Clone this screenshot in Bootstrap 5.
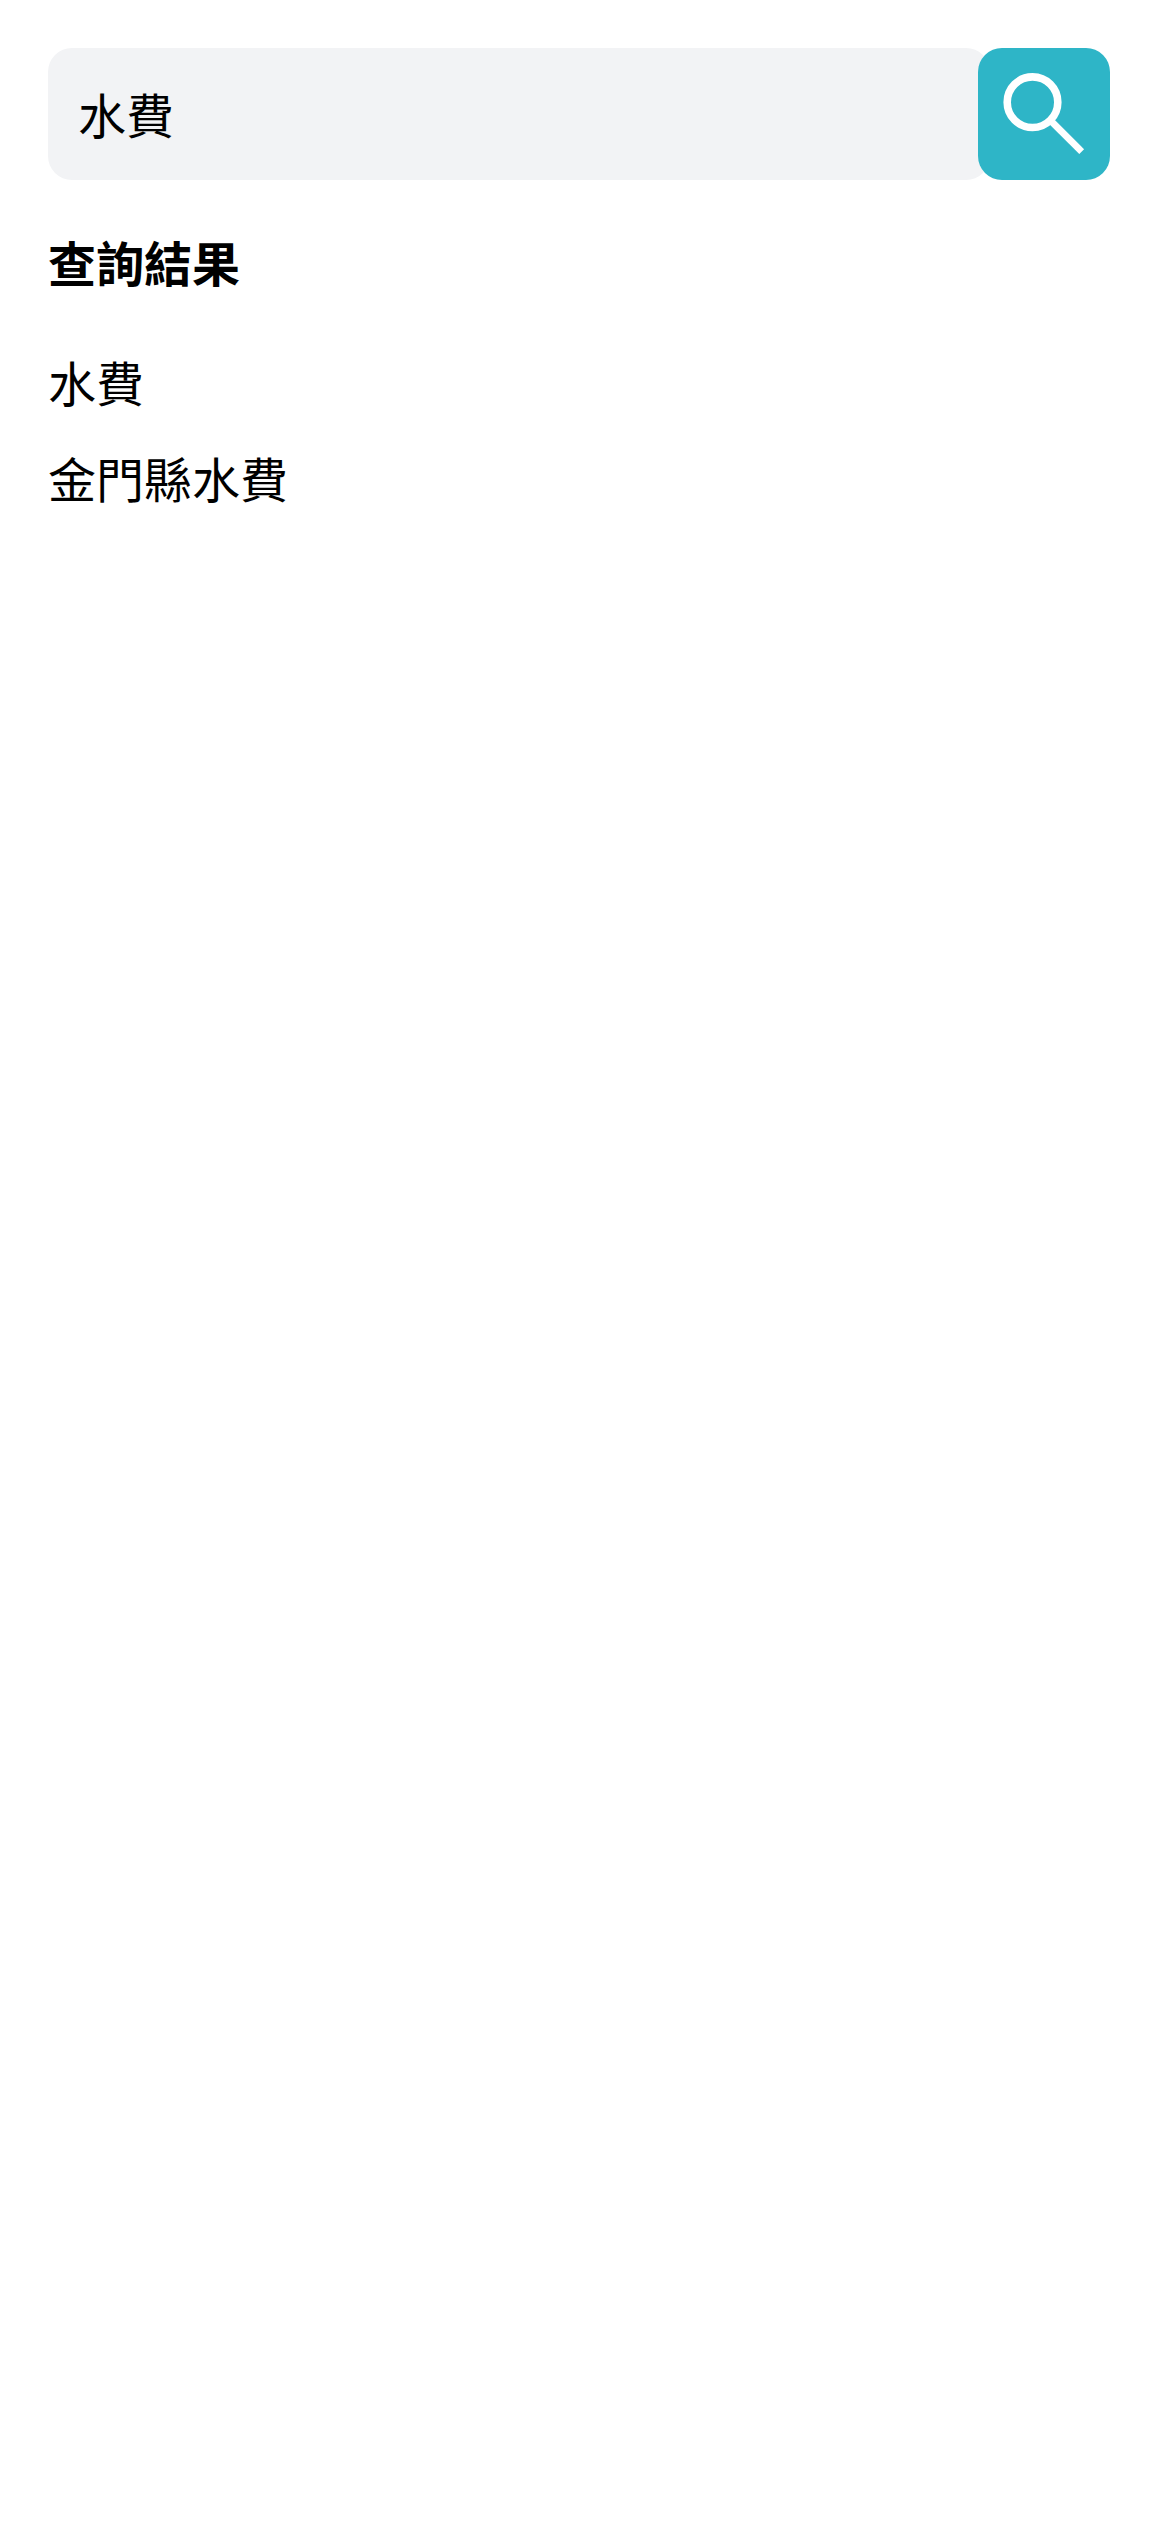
<!DOCTYPE html>
<html lang="zh-Hant">
<head>
<meta charset="utf-8">
<title>查詢結果</title>
<link href="https://cdn.jsdelivr.net/npm/bootstrap@5.3.0/dist/css/bootstrap.min.css" rel="stylesheet">
<style>
html, body { background: #fff; }
body { font-family: "Liberation Sans", "Noto Sans CJK TC", sans-serif; color: #000; padding: 48px 60px 0 48px; }
.search-field.form-control { height: 132px; flex: 1 1 auto; background: #f2f3f5; border: 0; border-radius: 24px; padding: 0 30px 3px; font-size: 48px; color: #000; box-shadow: none; }
.search-btn.btn { width: 132px; height: 132px; flex: none; margin-left: -12px; padding: 0; background: #2eb5c7; border: 0; border-radius: 24px; position: relative; }
.search-btn svg { display: block; }
.result-title { font-size: 48px; font-weight: 700; line-height: 72px; margin: 50px 0 0; }
.result-list { margin: 48px 0 0; padding: 0; list-style: none; }
.result-list li { font-size: 48px; line-height: 72px; margin-bottom: 24px; }
.result-list a { color: #000; text-decoration: none; }
</style>
</head>
<body>
<form class="d-flex" role="search">
  <input class="form-control search-field" type="text" value="水費" aria-label="搜尋">
  <button class="btn search-btn d-flex align-items-center justify-content-center" type="button" aria-label="搜尋">
    <svg width="132" height="132" viewBox="0 0 132 132" fill="none" stroke="#fff">
      <circle cx="54.5" cy="54.2" r="25.3" stroke-width="7.6"/>
      <path d="M72 72L103.7 103.7" stroke-width="6.8"/>
    </svg>
  </button>
</form>
<h1 class="result-title">查詢結果</h1>
<ul class="result-list">
  <li><a href="#">水費</a></li>
  <li><a href="#">金門縣水費</a></li>
</ul>
<script src="https://cdn.jsdelivr.net/npm/bootstrap@5.3.0/dist/js/bootstrap.bundle.min.js"></script>
</body>
</html>
